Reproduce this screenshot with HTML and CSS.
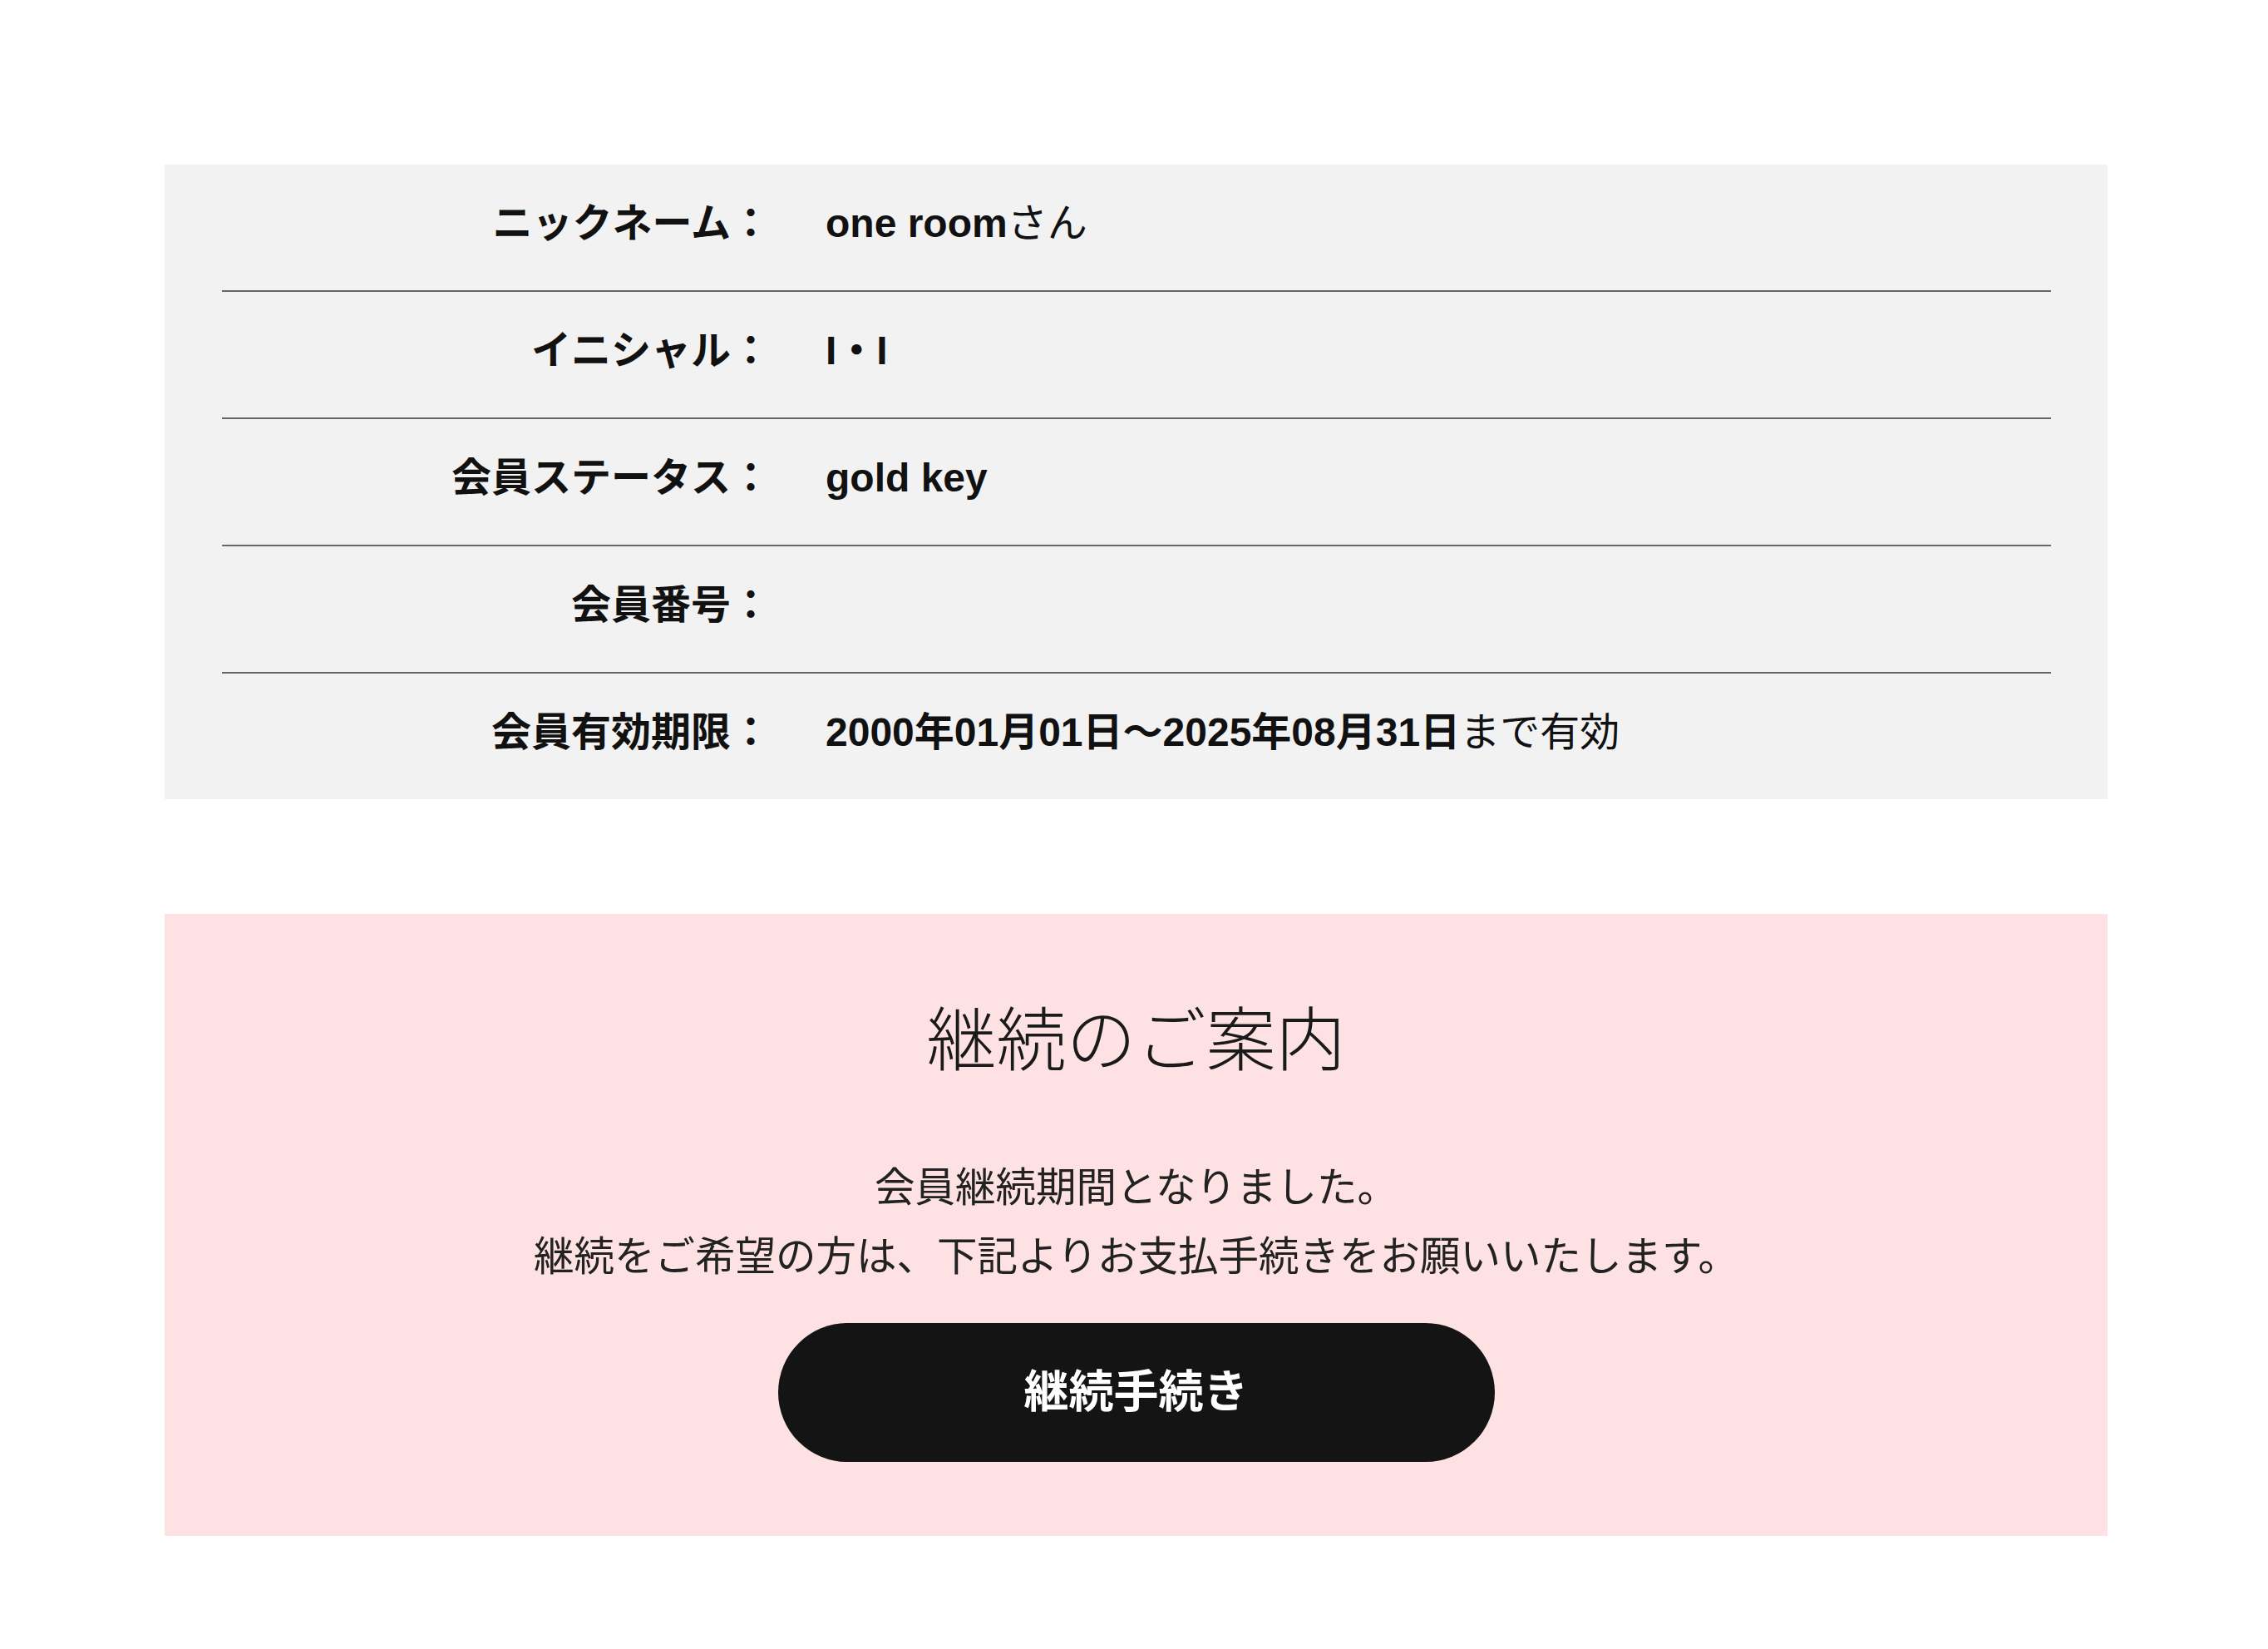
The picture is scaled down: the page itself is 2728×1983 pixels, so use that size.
FILE: index.html
```html
<!DOCTYPE html>
<html lang="ja">
<head>
  <meta charset="UTF-8">
  <meta name="viewport" content="width=device-width, initial-scale=1">
  <title>マイページ</title>
  <link rel="stylesheet" href="styles.css">
</head>
<body>
  <main class="mypage">
    <!-- 会員情報 -->
    <section class="member-info">
      <dl class="info-list">
        <div class="info-row">
          <dt>ニックネーム：</dt>
          <dd><strong>one room</strong>さん</dd>
        </div>
        <div class="info-row">
          <dt>イニシャル：</dt>
          <dd><strong>I・I</strong></dd>
        </div>
        <div class="info-row">
          <dt>会員ステータス：</dt>
          <dd><strong>gold key</strong></dd>
        </div>
        <div class="info-row">
          <dt>会員番号：</dt>
          <dd></dd>
        </div>
        <div class="info-row">
          <dt>会員有効期限：</dt>
          <dd><strong>2000年01月01日～2025年08月31日</strong>まで有効</dd>
        </div>
      </dl>
    </section>

    <!-- 継続のご案内 -->
    <section class="renewal">
      <h2 class="renewal-title">継続のご案内</h2>
      <p class="renewal-text">会員継続期間となりました。<br>継続をご希望の方は、下記よりお支払手続きをお願いいたします。</p>
      <a href="#" class="renewal-btn">継続手続き</a>
    </section>
  </main>
</body>
</html>
```

FILE: styles.css
```css
/* Global reset */
* {
  margin: 0;
  padding: 0;
  box-sizing: border-box;
}
body {
  font-family: "Liberation Sans", "Noto Sans CJK JP", sans-serif;
  background-color: #fff;
  color: #111;
  font-size: 48px;
}
.mypage {
  width: 2337px;
  margin-left: 198px;
  padding-top: 198px;
}
/* Member info */
.member-info {
  background-color: #f2f2f2;
  padding: 0 68px 0 69px;
}
.info-row {
  display: flex;
  align-items: center;
  line-height: 72px;
  padding: 35px 0 44px;
  border-bottom: 2px solid #666;
}
.info-row:last-child {
  border-bottom: none;
}
.info-row dt {
  width: 30%;
  flex-shrink: 0;
  text-align: right;
  font-weight: bold;
}
.info-row dd {
  margin-left: 66px;
  min-height: 72px;
  font-weight: normal;
}
.info-row dd strong {
  font-weight: bold;
}
/* Renewal notice */
.renewal {
  margin-top: 138px;
  background-color: #fee2e3;
  padding: 103px 0 89px;
  text-align: center;
}
.renewal-title {
  font-size: 84px;
  font-weight: 300;
  line-height: 101px;
  color: #1a1a1a;
}
.renewal-text {
  margin-top: 84px;
  font-size: 48.5px;
  line-height: 83px;
  color: #222;
}
.renewal-btn {
  display: block;
  width: 862px;
  margin: 38px auto 0;
  padding: 43px 0;
  background-color: #141414;
  border-radius: 999px;
  color: #fff;
  font-size: 54px;
  font-weight: bold;
  line-height: 81px;
  text-decoration: none;
}
```
